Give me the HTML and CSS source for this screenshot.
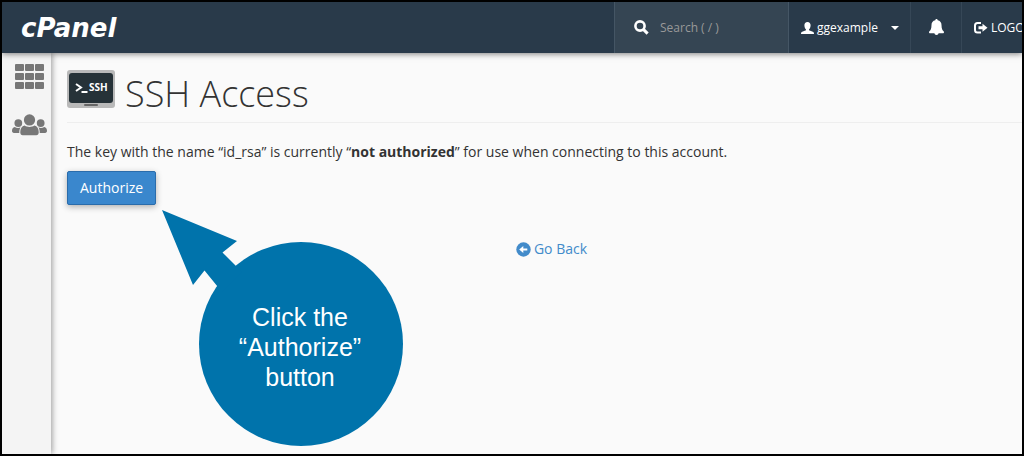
FILE: index.html
```html
<!DOCTYPE html>
<html lang="en">
<head>
<meta charset="utf-8">
<title>cPanel - SSH Access</title>
<link rel="stylesheet" href="styles.css">
</head>
<body>
<div class="frame">
  <header class="topbar">
    <a class="logo" href="#">cPanel</a>
    <label class="search">
      <svg width="15" height="15" viewBox="0 0 15 15" aria-hidden="true"><circle cx="6" cy="6" r="4.600" fill="none" stroke="#fff" stroke-width="2.600"/><path d="M9.600 9.600 13.600 13.600" stroke="#fff" stroke-width="3"/></svg>
      <input class="search-input" type="text" placeholder="Search ( / )" aria-label="Search">
    </label>
    <button class="nav-item user" type="button">
      <svg width="13" height="12" viewBox="0 0 13 12" aria-hidden="true"><path fill="#fff" d="M6.500 0C4.500 0 3.400 1.300 3.400 3.300c0 1.800.7 3.300 1.600 4.100v.9L1.200 9.800C.4 10.200 0 10.700 0 12h13c0-1.300-.4-1.800-1.200-2.200L8 8.300v-.9c.9-.8 1.600-2.300 1.600-4.100C9.600 1.300 8.500 0 6.500 0z"/></svg>
      <span>ggexample</span>
      <svg class="caret" width="8" height="4" viewBox="0 0 8 4" aria-hidden="true"><path fill="#fff" d="M0 0h8L4 4z"/></svg>
    </button>
    <button class="nav-item bell" type="button" aria-label="Notifications">
      <svg width="15" height="17" viewBox="0 0 15 17" aria-hidden="true"><path fill="#fff" d="M7.500 0c-.8 0-1.200.6-1.200 1.300C3.800 1.800 2.500 3.700 2.500 6c0 3.800-1 5.200-2.100 6.300-.8.900-.3 1.900.7 1.900h12.800c1 0 1.500-1 .7-1.900-1.100-1.100-2.100-2.500-2.100-6.300 0-2.300-1.300-4.200-3.800-4.700C8.700.6 8.300 0 7.500 0zM5.400 14c0 1.200.9 2 2.100 2s2.100-.8 2.100-2z"/></svg>
    </button>
    <a class="nav-item logout" href="#">
      <svg width="14" height="12" viewBox="0 0 14 12" aria-hidden="true"><path fill="none" stroke="#fff" stroke-width="2" d="M7 1H3.500Q1 1 1 3.500v4.500Q1 10.500 3.500 10.500H7"/><path fill="#fff" d="M4.500 4.300h4V1.800L13.500 5.800 8.500 9.800V7.300h-4z"/></svg>
      <span>LOGO</span>
    </a>
  </header>
  <div class="body">
    <nav class="sidebar">
      <a href="#" aria-label="Home">
        <svg width="29" height="25" viewBox="0 0 29 25" fill="#777" aria-hidden="true"><rect width="9" height="7" rx="1"/><rect x="10" width="9" height="7" rx="1"/><rect x="20" width="9" height="7" rx="1"/><rect y="9" width="9" height="7" rx="1"/><rect x="10" y="9" width="9" height="7" rx="1"/><rect x="20" y="9" width="9" height="7" rx="1"/><rect y="18" width="9" height="7" rx="1"/><rect x="10" y="18" width="9" height="7" rx="1"/><rect x="20" y="18" width="9" height="7" rx="1"/></svg>
      </a>
      <a href="#" aria-label="User Manager">
        <svg width="35" height="22" viewBox="0 0 36 22" fill="#777" aria-hidden="true"><circle cx="18" cy="5.800" r="5.800"/><circle cx="6.500" cy="9" r="4"/><circle cx="29.500" cy="9" r="4"/><path d="M8.500 18.500c0-3.800 1.500-6.500 4.500-7 1.500 1 3 1.500 5 1.500s3.500-.5 5-1.500c3 .5 4.500 3.200 4.500 7 0 2-1 3-2.500 3H11c-1.500 0-2.500-1-2.500-3zM0 17c0-2.200 1-3.700 2.800-4 2 1.400 4.600 1.400 6 .4-1 1.800-1.400 3.500-1.300 5.800H2c-1.300 0-2-.7-2-2.200zM36 17c0-2.200-1-3.700-2.800-4-2 1.400-4.600 1.400-6 .4 1 1.800 1.400 3.500 1.300 5.800H34c1.300 0 2-.7 2-2.200z"/></svg>
      </a>
    </nav>
    <main class="content">
      <h1 class="title">
        <svg width="48" height="38" viewBox="0 0 48 38" aria-hidden="true"><rect width="48" height="38" rx="3" fill="#b9b9b9"/><rect x="2" y="3" width="44" height="30" rx="3" fill="#263238"/><rect x="17" y="34" width="14" height="2" rx="1" fill="#666"/><path d="M9 14l5 3.500-5 3.500" fill="none" stroke="#fff" stroke-width="2"/><path d="M14.500 22h6" stroke="#fff" stroke-width="2"/><text class="icon-text" x="22" y="21">SSH</text></svg>
        <span>SSH Access</span>
      </h1>
      <p class="message">The key with the name “id_rsa” is currently “<strong>not authorized</strong>” for use when connecting to this account.</p>
      <button class="authorize" type="button">Authorize</button>
      <a class="back" href="#">
        <svg width="15" height="15" viewBox="0 0 15 15" aria-hidden="true"><circle cx="7.500" cy="7.500" r="7.200" fill="#428bca"/><path fill="#fff" d="M3.200 7.500 7.300 3.900v2.500h4v2.200h-4v2.500z"/></svg>
        <span>Go Back</span>
      </a>
    </main>
  </div>
  <div class="callout">
    <svg width="241" height="237" viewBox="0 0 241 237" fill="#0073ab" aria-hidden="true"><circle cx="139" cy="134" r="102"/><path d="M0 0 75 31 60.500 42.500 80 62 60 82 42.500 60.500 31 75z"/></svg>
    <p class="callout-text">Click the<br>“Authorize”<br>button</p>
  </div>
</div>
</body>
</html>
```
FILE: styles.css
```css
* {
  box-sizing: border-box;
}

body {
  margin: 0;
  background: #fafafa;
  color: #333;
  font: 14px/20px "Open Sans", sans-serif;
}

.frame {
  position: relative;
  display: flex;
  flex-direction: column;
  min-height: 100vh;
  border: 2px solid #000;
  overflow: hidden;
}

svg {
  display: block;
  flex: none;
}

a {
  text-decoration: none;
}

.topbar {
  position: relative;
  z-index: 1;
  display: flex;
  height: 51px;
  background: #293a4a;
  box-shadow: 0 1px 6px rgba(0, 0, 0, 0.5);
}

.logo {
  align-self: center;
  margin-right: auto;
  padding-left: 19px;
  color: #fff;
  font: italic bold 26px/30px "DejaVu Sans", sans-serif;
}

.search {
  display: flex;
  align-items: center;
  gap: 11px;
  width: 175px;
  padding-left: 19px;
  border: 1px solid #455665;
  border-width: 0 1px;
  background: #354553;
}

.search-input {
  width: 120px;
  padding: 0;
  border: 0;
  background: none;
  color: #fff;
  font: 12px/20px "Open Sans", sans-serif;
}

.search-input::placeholder {
  color: #999;
}

.nav-item {
  display: flex;
  align-items: center;
  gap: 3px;
  padding: 0 12px;
  border: 0;
  background: none;
  color: #fff;
  font: 12px/20px "Open Sans", sans-serif;
  white-space: nowrap;
}

.user {
  width: 121px;
}

.caret {
  margin-left: 10px;
}

.bell {
  justify-content: center;
  width: 51px;
  border-left: 1px solid #364757;
}

.logout {
  width: 61px;
  border-left: 1px solid #364757;
}

.body {
  display: flex;
  flex: 1;
}

.sidebar {
  display: flex;
  flex-direction: column;
  align-items: center;
  gap: 25px;
  width: 49px;
  padding: 11px 0 0 6px;
  background: #f4f4f4;
  box-shadow: 1px 0 6px rgba(0, 0, 0, 0.4);
}

.content {
  display: flex;
  flex: 1;
  flex-direction: column;
  align-items: flex-start;
  margin-right: -14px;
  padding: 17px 0 20px 16px;
}

.title {
  display: flex;
  align-items: flex-start;
  align-self: stretch;
  gap: 10px;
  margin: 0 0 19px;
  padding-bottom: 4px;
  border-bottom: 1px solid #eee;
  font-size: 36px;
  font-weight: 300;
  line-height: 48px;
}

.icon-text {
  fill: #fff;
  font: bold 10px "Open Sans", sans-serif;
}

.message {
  margin: 0 0 9px;
}

.authorize {
  padding: 6px 12px;
  border: 1px solid #2a6cab;
  border-radius: 2px;
  background: #3a87cd;
  box-shadow: 0 2px 6px rgba(0, 0, 0, 0.3);
  color: #fff;
  font: 14px/20px "Open Sans", sans-serif;
}

.back {
  display: flex;
  align-items: center;
  align-self: center;
  gap: 3px;
  margin-top: 34px;
  color: #428bca;
}

.callout {
  position: absolute;
  top: 208px;
  left: 160px;
}

.callout-text {
  position: absolute;
  top: 92px;
  left: 36px;
  width: 204px;
  margin: 0;
  color: #fff;
  font: 25px/30px "Liberation Sans", sans-serif;
  text-align: center;
}
```
